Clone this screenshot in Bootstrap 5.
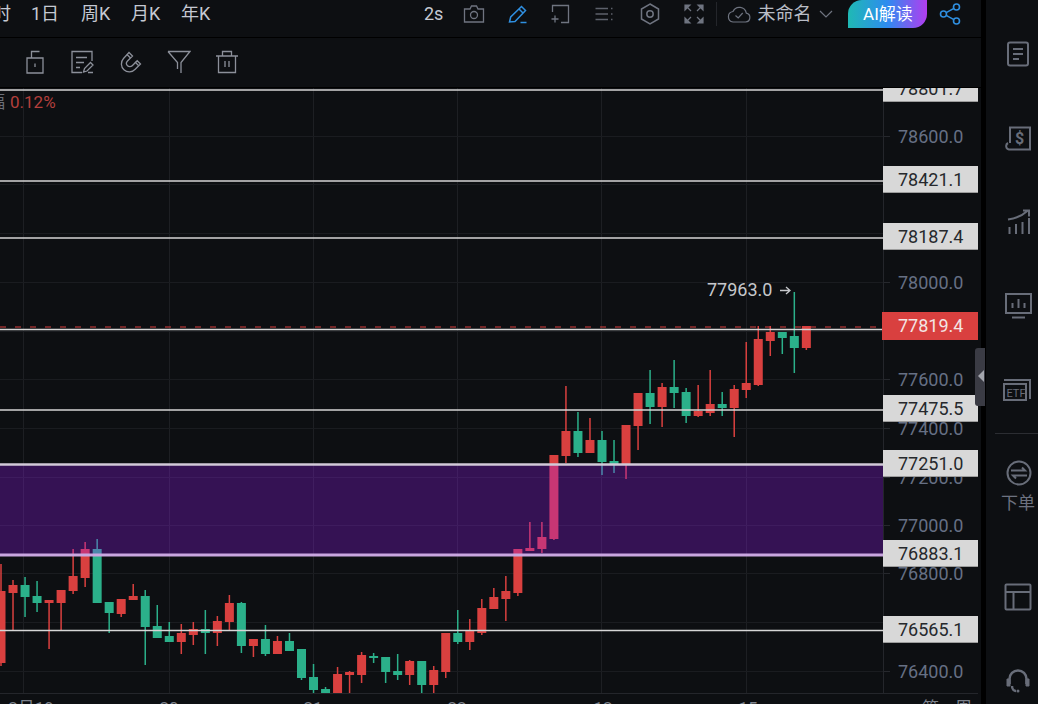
<!DOCTYPE html>
<html lang="zh">
<head>
  <meta charset="UTF-8">
  <title>K线图</title>
  <meta name="viewport" content="width=device-width, initial-scale=1">
  <link href="https://cdn.jsdelivr.net/npm/bootstrap@5.3.3/dist/css/bootstrap.min.css" rel="stylesheet">
  <style>
    html, body { height: 100%; }
    body {
      background: #000;
      font-family: Roboto, "Noto Sans CJK SC", sans-serif;
      overflow: hidden;
      width: 1038px;
      height: 704px;
    }
    .app-shell { width: 1038px; height: 704px; }
    .main-pane { width: 981px; background: #0d0f12; }

    /* top bar */
    .top-bar {
      height: 38px;
      padding-bottom: 9px;
      border-bottom: 1px solid #000;
      color: #c5c9d2;
      font-size: 18px;
      overflow: hidden;
    }
    .period-item { line-height: 26px; white-space: nowrap; }
    .period-first { margin-left: -7px; width: 38px; }
    .period-wide { width: 50px; }
    .top-icon { flex: none; display: block; }
    .top-sep { width: 1px; height: 24px; background: #24262b; }
    .ai-btn {
      width: 79px;
      height: 28px;
      color: #fff;
      font-size: 17px;
      line-height: 28px;
      text-align: center;
      border-radius: 14px 0 14px 0;
      background: linear-gradient(90deg, #1fb9b4 0%, #2e8bf0 50%, #b23df0 100%);
    }

    /* tool bar */
    .tool-bar { height: 50px; padding-bottom: 2px; border-bottom: 1px solid #000; }

    /* chart */
    .chart-pane { height: 616px; overflow: hidden; }
    .chart-svg { display: block; }
    .axis-text { fill: #667084; font-size: 18px; font-family: Roboto, sans-serif; }
    .high-text { fill: #c6c8cc; font-size: 18px; font-family: Roboto, sans-serif; }
    .date-text { fill: #7d828c; font-size: 17px; font-family: Roboto, "Noto Sans CJK SC", sans-serif; }
    .pct-text {
      position: absolute; left: -12px; top: 4px;
      font-size: 17px; line-height: 20px; color: #b33f3c; white-space: nowrap;
    }
    .pct-text span { color: #6b6f78; margin-right: 5px; }
    .price-tag {
      position: absolute;
      left: 883px;
      width: 95px;
      height: 27px;
      background: #d8d8d8;
      border-bottom: 1px solid #9c9c9c;
      color: #26282c;
      font-size: 18px;
      line-height: 28px;
      padding-left: 15px;
    }
    .price-tag.last { height: 28px; left: 882px; width: 96px; padding-left: 16px; background: #d9403f; border: 0; color: #f3e4e4; }
    .side-handle {
      position: absolute; left: 975px; top: 348px;
      width: 10px; height: 58px;
      background: #3a3b44;
      border-radius: 3px 0 0 3px;
    }
    .side-handle::after {
      content: "";
      position: absolute; left: 3px; top: 22px;
      border-style: solid; border-width: 6px 6px 6px 0;
      border-color: transparent #a3a5ad transparent transparent;
    }

    /* right rail */
    .side-rail {
      width: 52px;
      height: 704px;
      margin-left: 5px;
      background: #0d0f12;
      padding-top: 12px;
      color: #686d79;
      overflow: hidden;
    }
    .rail-item { flex: none; height: 84px; width: 100%; }
    .rail-order { height: 121px; padding-top: 26px; }
    .rail-rule { flex: none; height: 1px; background: #2b2d32; margin: 1px 0 0 9px; }
    .rail-label { font-size: 17px; line-height: 22px; color: #6d7280; margin: 6px 0 0 -5px; white-space: nowrap; }
    .rail-pad-17 { padding-left: 17px; }
    .rail-pad-18 { padding-left: 18px; }
    .rail-pad-19 { padding-left: 19px; }
    .rail-pad-20 { padding-left: 20px; }
    .rail-pad-21 { padding-left: 21px; }
  </style>
</head>
<body>

<div class="app-shell d-flex position-relative">
  <div class="main-pane d-flex flex-column">

    <!-- periods and top icons -->
    <div class="top-bar d-flex align-items-center">
      <div class="period-item period-first">时</div>
      <div class="period-item period-wide">1日</div>
      <div class="period-item period-wide">周K</div>
      <div class="period-item period-wide">月K</div>
      <div class="period-item period-wide">年K</div>

      <div class="period-item" style="margin-left:193px">2s</div>
      <svg class="top-icon" style="margin-left:20px" width="22" height="20" viewBox="0 0 22 20" fill="none" stroke="#6f7480" stroke-width="1.3"><path d="M1.5 5h5.5l1.5-3h5l1.500 3h5.500v13h-19z"/><circle cx="11" cy="11" r="3.500"/></svg>
      <svg class="top-icon" style="margin-left:23px" width="20" height="20" viewBox="0 0 20 20" fill="none" stroke="#2f8fe0" stroke-width="1.500"><path d="M1.500 18l1.200-5L13.500 2.500l4 4L7 17.500z"/><path d="M11 5l4 4M12.500 18.500h6"/></svg>
      <svg class="top-icon" style="margin-left:22px" width="20" height="20" viewBox="0 0 20 20" fill="none" stroke="#6f7480" stroke-width="1.300"><path d="M2.500 8V1.500h16v17h-7.500"/><path d="M1.500 15h7M5 11.500v7"/></svg>
      <svg class="top-icon" style="margin-left:25px" width="18" height="16" viewBox="0 0 18 16" fill="none" stroke="#5d616b" stroke-width="1.300"><path d="M0.500 2.500h12.500M0.500 8h12.500M0.500 13.500h12.500M16 2.500h1.500M16 8h1.500M16 13.500h1.500"/></svg>
      <svg class="top-icon" style="margin-left:27px" width="20" height="22" viewBox="0 0 20 22" fill="none" stroke="#6f7480" stroke-width="1.500"><path d="M10 1l8.500 5v10L10 21l-8.500-5V6z"/><circle cx="10" cy="11" r="3.200"/></svg>
      <svg class="top-icon" style="margin-left:24px" width="20" height="20" viewBox="0 0 20 20" fill="#6f7480" stroke="#6f7480" stroke-width="1.200"><path d="M1 1h5L1 6zM19 1h-5l5 5zM1 19h5l-5-5zM19 19h-5l5-5z"/><path d="M3 3l4 4M17 3l-4 4M3 17l4-4M17 17l-4-4" fill="none"/></svg>
      <div class="top-sep" style="margin-left:12px"></div>
      <svg class="top-icon" style="margin-left:10px" width="24" height="18" viewBox="0 0 24 18" fill="none" stroke="#6f7480" stroke-width="1.200"><path d="M6 17h12.500a4.500 4.500 0 0 0 .8-8.900A7 7 0 0 0 6 6.500 5.300 5.300 0 0 0 6 17z"/><path d="M8.500 10.500l2.700 2.500 4.500-5"/></svg>
      <div class="period-item" style="margin-left:6px;color:#b9bdc6">未命名</div>
      <svg class="top-icon" style="margin-left:8px" width="14" height="8" viewBox="0 0 14 8" fill="none" stroke="#6f7480" stroke-width="1.200"><path d="M1 1l6 6 6-6"/></svg>
      <div class="ai-btn flex-shrink-0" style="margin-left:15px">AI解读</div>
      <svg class="top-icon" style="margin-left:12px" width="22" height="22" viewBox="0 0 22 22" fill="none" stroke="#2f8fe0" stroke-width="1.600"><circle cx="4.500" cy="11" r="3"/><circle cx="17.500" cy="4" r="3"/><circle cx="17.500" cy="18" r="3"/><path d="M7.200 9.600l7.700-4.200M7.200 12.400l7.700 4.200"/></svg>
    </div>

    <!-- drawing tools -->
    <div class="tool-bar d-flex align-items-center">
      <svg class="top-icon" style="margin-left:26px" width="18" height="24" viewBox="0 0 18 24" fill="none" stroke="#8c909a" stroke-width="1.300"><path d="M1 8h16v15H1z"/><path d="M5.500 8V1.500h8"/><path d="M9 13.500v3.500"/></svg>
      <svg class="top-icon" style="margin-left:27px" width="23" height="24" viewBox="0 0 23 24" fill="none" stroke="#8c909a" stroke-width="1.300"><path d="M21 11V1.500H1v21h10"/><path d="M5 7.500h11M5 12.500h8M5 17.500h4"/><path d="M12.500 22l1-3.500 6-6 2.500 2.500-6 6zM17 22.500h5"/></svg>
      <svg class="top-icon" style="margin-left:26px" width="22" height="24" viewBox="0 0 22 24" fill="none" stroke="#8c909a" stroke-width="1.300"><path d="M9 2.500l3.500 3.500-5 5a3.300 3.300 0 0 0 4.700 4.700l5-5 3.300 3.300-5.300 5.300A7.800 7.800 0 0 1 3.500 8.500z"/><path d="M7 4.500l3.500 3.500M15 12l3.500 3.500"/></svg>
      <svg class="top-icon" style="margin-left:25px" width="24" height="24" viewBox="0 0 24 24" fill="none" stroke="#8c909a" stroke-width="1.300"><path d="M1 1.500h22l-9 11v10.500M10.500 19V12.500L1 1.500"/></svg>
      <svg class="top-icon" style="margin-left:24px" width="24" height="24" viewBox="0 0 24 24" fill="none" stroke="#8c909a" stroke-width="1.300"><path d="M1 6h22M7.500 6V1.500h9V6M3.500 6v16.500h17V6M10 11v6M14 11v6"/></svg>
    </div>

    <!-- chart canvas -->
    <div class="chart-pane position-relative" id="chart">
      <svg class="chart-svg" id="chart-svg" width="981" height="616" viewBox="0 88 981 616"></svg>
      <div class="pct-text"><span>幅</span>0.12%</div>
    </div>
  </div>

  <div class="side-handle"></div>

  <!-- right rail -->
  <div class="side-rail d-flex flex-column flex-shrink-0">
    <div class="rail-item rail-pad-20 d-flex align-items-center">
      <svg width="24" height="26" viewBox="0 0 24 26" fill="none" stroke="currentColor" stroke-width="2"><rect x="2" y="1.500" width="20" height="23" rx="2"/><path d="M7 8h10M7 13h10M7 18h6"/></svg>
    </div>
    <div class="rail-item rail-pad-18 d-flex align-items-center">
      <svg width="28" height="26" viewBox="0 0 28 26" fill="none" stroke="currentColor" stroke-width="2"><path d="M6 18V2.500h20v22H5a3.500 3.500 0 0 1-1-6.500"/><text x="11" y="19" font-size="16" font-weight="700" fill="currentColor" stroke="none" font-family="Roboto, sans-serif">$</text></svg>
    </div>
    <div class="rail-item rail-pad-21 d-flex align-items-center">
      <svg width="24" height="26" viewBox="0 0 24 26" fill="none" stroke="currentColor" stroke-width="2"><path d="M1 10.500C8 9.500 15 7 21 1.500M16 1.500h6v6M2.500 18v7M9 15v10M15.500 13v12M22 9v16"/></svg>
    </div>
    <div class="rail-item rail-pad-19 d-flex align-items-center">
      <svg width="28" height="26" viewBox="0 0 28 26" fill="none" stroke="currentColor" stroke-width="2"><rect x="1" y="1" width="25" height="19"/><path d="M7.500 15v-5M13.500 15V6M19.500 15v-5M7 24.500h13"/></svg>
    </div>
    <div class="rail-item rail-pad-17 d-flex align-items-center">
      <svg width="30" height="24" viewBox="0 0 30 24" fill="none" stroke="currentColor" stroke-width="2"><path d="M1 2h26v19"/><rect x="1" y="6" width="22" height="16"/><text x="3.500" y="19" font-size="11" fill="currentColor" stroke="none" font-family="Roboto, sans-serif">ETF</text></svg>
    </div>
    <div class="rail-rule"></div>
    <div class="rail-item rail-order rail-pad-20 d-flex flex-column align-items-start">
      <svg width="26" height="26" viewBox="0 0 26 26" fill="none" stroke="currentColor" stroke-width="2"><circle cx="13" cy="13" r="11.500"/><path d="M5 10.500h14l-3-3M21 15.500H7l3 3"/></svg>
      <div class="rail-label">下单</div>
    </div>
    <div class="rail-item rail-pad-18 d-flex align-items-center">
      <svg width="28" height="28" viewBox="0 0 28 28" fill="none" stroke="currentColor" stroke-width="2"><rect x="1.500" y="1.500" width="25" height="25" rx="1"/><path d="M1.500 9h25M9.500 9v17.500"/></svg>
    </div>
    <div class="rail-item rail-pad-19 d-flex align-items-center">
      <svg width="26" height="26" viewBox="0 0 26 26" fill="none" stroke="currentColor" stroke-width="2.500"><path d="M4.500 16V11a8.500 8.500 0 0 1 17 0v5"/><path d="M2 11h3v7H2zM21 11h3v7h-3z" fill="currentColor" stroke-width="1"/><path d="M7 18c0 3 2 5 4 5"/><circle cx="13" cy="23" r="1.500" fill="currentColor" stroke="none"/></svg>
    </div>
  </div>
</div>

<script src="https://cdn.jsdelivr.net/npm/bootstrap@5.3.3/dist/js/bootstrap.bundle.min.js"></script>
<script>
  const RED = '#d9403f';
  const GREEN = '#2bb08a';
  const AXIS_X = 883;

  // k, wick top, wick bottom, body top, body bottom, r/g  (x = 12.02k + 1)
  const candles = [
    [0,564,666,591,663,'r'],[1,580,630,585,593,'r'],[2,577,617,585,597,'g'],[3,581,612,596,603,'g'],
    [4,600,649,600,603,'r'],[5,590,630,590,603,'r'],[6,549,594,576,591,'r'],[7,542,587,549,578,'r'],
    [8,539,603,549,603,'g'],[9,602,633,602,613,'g'],[10,599,617,599,614,'r'],[11,584,600,596,600,'r'],
    [12,590,665,596,627,'g'],[13,605,638,626,638,'g'],[14,622,642,636,642,'g'],[15,624,654,633,642,'r'],
    [16,622,645,629,635,'r'],[17,610,654,629,633,'g'],[18,616,646,621,633,'r'],[19,595,630,603,622,'r'],
    [20,602,653,603,646,'g'],[21,639,657,639,646,'r'],[22,625,656,639,654,'g'],[23,636,654,641,654,'r'],
    [24,633,651,641,651,'g'],[25,649,680,649,678,'g'],[26,664,693,677,690,'g'],[27,687,693,689,693,'g'],
    [28,667,693,674,693,'r'],[29,671,693,672,675,'r'],[30,652,683,655,675,'r'],[31,653,663,656,658,'g'],
    [32,657,683,657,672,'g'],[33,654,680,671,675,'g'],[34,660,685,661,675,'r'],[35,661,693,661,685,'g'],
    [36,666,693,670,685,'r'],[37,633,678,633,672,'r'],[38,610,644,633,642,'g'],[39,619,650,631,642,'r'],
    [40,599,635,608,633,'r'],[41,588,609,597,609,'r'],[42,576,621,591,599,'r'],[43,549,596,549,593,'r'],
    [44,522,551,548,551,'r'],[45,522,553,537,549,'r'],[46,455,540,455,539,'r'],[47,386,463,431,456,'r'],
    [48,412,457,431,453,'g'],[49,418,453,440,453,'r'],[50,431,475,440,462,'g'],[51,440,473,461,464,'g'],
    [52,425,479,425,465,'r'],[53,393,450,393,426,'r'],[54,370,424,393,407,'g'],[55,383,427,387,407,'r'],
    [56,360,408,387,393,'g'],[57,388,423,392,416,'g'],[58,385,417,411,416,'r'],[59,370,416,404,413,'r'],
    [60,392,416,404,408,'g'],[61,385,437,389,408,'r'],[62,342,398,383,390,'r'],[63,326,386,339,385,'r'],
    [64,326,356,332,341,'r'],[65,332,354,332,338,'g'],[66,292,373,336,348,'g'],[67,326,350,326,348,'r']
  ];

  // the ticks at 78400, 78200, 77800 and 76600 sit fully behind a price tag, so no text for them
  const axisTicks = [
    [136,'78600.0'],[184,''],[233,''],[282,'78000.0'],[331,''],[379,'77600.0'],
    [428,'77400.0'],[477,'77200.0'],[525,'77000.0'],[573,'76800.0'],[622,''],[671,'76400.0']
  ];
  const gridX = [23, 169, 313, 457, 601, 746];
  const dates = [[31,'2月19'],[169,'20'],[313,'21'],[457,'22'],[603,'12'],[748,'15']];

  // level lines with the price tag that belongs to each
  const levels = [
    [90,'78801.7',1.5,'#d6d6d6'],[181,'78421.1',1.5,'#d6d6d6'],[238,'78187.4',1.5,'#d6d6d6'],
    [329.5,null,1.5,'#d6d6d6'],[410,'77475.5',1.5,'#d6d6d6'],[464.5,'77251.0',2.5,'#d2cad8'],
    [555,'76883.1',3,'#c9a6e0'],[630.500,'76565.1',1.5,'#d6d6d6']
  ];

  const svg = document.getElementById('chart-svg');
  const chart = document.getElementById('chart');
  let s = '';

  gridX.forEach(x => { s += `<path d="M${x}.5 88V693" stroke="#1d1f23"/>`; });
  axisTicks.forEach(t => {
    s += `<path d="M0 ${t[0]}.5H${AXIS_X}" stroke="#1a1c20"/>`;
    s += `<path d="M${AXIS_X} ${t[0]}.5h7" stroke="#26282d"/>`;
    if (t[1]) s += `<text class="axis-text" x="898" y="${t[0] + 6.500}">${t[1]}</text>`;
  });
  s += `<path d="M${AXIS_X}.5 88V693M0 693.5H978" stroke="#24262b"/>`;

  candles.forEach(c => {
    const x = 12.02 * c[0] + 1;
    const col = c[5] === 'r' ? RED : GREEN;
    s += `<rect x="${x - 0.75}" y="${c[1]}" width="1.500" height="${c[2] - c[1]}" fill="${col}"/>`;
    s += `<rect x="${x - 4.500}" y="${c[3]}" width="9" height="${c[4] - c[3]}" fill="${col}"/>`;
  });

  // band sits over the candles, that is why they turn pink and blue in it
  s += `<rect x="0" y="464" width="${AXIS_X}" height="91" fill="rgb(157,27,255)" fill-opacity="0.28"/>`;

  levels.forEach(l => {
    s += `<path d="M0 ${l[0]}H${AXIS_X}" stroke="${l[3]}" stroke-width="${l[2]}"/>`;
  });
  s += `<path d="M0 327H${AXIS_X}" stroke="${RED}" stroke-dasharray="6 9"/>`;

  s += `<text class="high-text" x="707" y="296">77963.0</text>`;
  s += `<path d="M780 290.500h10M786 287l4 3.500-4 3.500" fill="none" stroke="#c6c8cc" stroke-width="1.300"/>`;

  dates.forEach(d => { s += `<text class="date-text" x="${d[0]}" y="714" text-anchor="middle">${d[1]}</text>`; });
  s += `<text class="date-text" x="922" y="714">第</text><text class="date-text" x="955" y="714">周</text>`;

  svg.innerHTML = s;

  levels.forEach(l => {
    if (!l[1]) return;
    const tag = document.createElement('div');
    tag.className = 'price-tag';
    tag.style.top = (Math.round(l[0]) - 15 - 88) + 'px';
    tag.textContent = l[1];
    chart.appendChild(tag);
  });
  const lastTag = document.createElement('div');
  lastTag.className = 'price-tag last';
  lastTag.style.top = (312 - 88) + 'px';
  lastTag.textContent = '77819.4';
  chart.appendChild(lastTag);
</script>

</body>
</html>
